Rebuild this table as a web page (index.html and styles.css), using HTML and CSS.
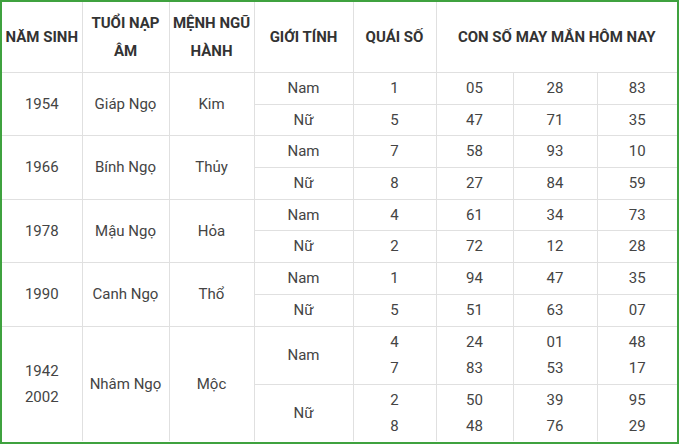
FILE: index.html
```html
<!DOCTYPE html>
<html lang="vi">
<head>
<meta charset="utf-8">
<title>Con số may mắn</title>
<link rel="stylesheet" href="styles.css">
</head>
<body>
<div class="frame">
<table class="luck">
<colgroup>
<col class="c1"><col class="c2"><col class="c3"><col class="c4"><col class="c5"><col class="c6"><col class="c7"><col class="c8">
</colgroup>
<thead>
<tr class="head">
<th>NĂM SINH</th>
<th>TUỔI NẠP<br>ÂM</th>
<th>MỆNH NGŨ<br>HÀNH</th>
<th>GIỚI TÍNH</th>
<th>QUÁI SỐ</th>
<th colspan="3">CON SỐ MAY MẮN HÔM NAY</th>
</tr>
</thead>
<tbody>
<tr class="r32"><td rowspan="2">1954</td><td rowspan="2">Giáp Ngọ</td><td rowspan="2">Kim</td><td>Nam</td><td>1</td><td>05</td><td>28</td><td>83</td></tr>
<tr class="r31"><td>Nữ</td><td>5</td><td>47</td><td>71</td><td>35</td></tr>
<tr class="r32"><td rowspan="2">1966</td><td rowspan="2">Bính Ngọ</td><td rowspan="2">Thủy</td><td>Nam</td><td>7</td><td>58</td><td>93</td><td>10</td></tr>
<tr class="r32"><td>Nữ</td><td>8</td><td>27</td><td>84</td><td>59</td></tr>
<tr class="r31"><td rowspan="2">1978</td><td rowspan="2">Mậu Ngọ</td><td rowspan="2">Hỏa</td><td>Nam</td><td>4</td><td>61</td><td>34</td><td>73</td></tr>
<tr class="r32"><td>Nữ</td><td>2</td><td>72</td><td>12</td><td>28</td></tr>
<tr class="r32"><td rowspan="2">1990</td><td rowspan="2">Canh Ngọ</td><td rowspan="2">Thổ</td><td>Nam</td><td>1</td><td>94</td><td>47</td><td>35</td></tr>
<tr class="r32"><td>Nữ</td><td>5</td><td>51</td><td>63</td><td>07</td></tr>
<tr class="r58"><td rowspan="2">1942<br>2002</td><td rowspan="2">Nhâm Ngọ</td><td rowspan="2">Mộc</td><td>Nam</td><td>4<br>7</td><td>24<br>83</td><td>01<br>53</td><td>48<br>17</td></tr>
<tr class="r57"><td>Nữ</td><td>2<br>8</td><td>50<br>48</td><td>39<br>76</td><td>95<br>29</td></tr>
</tbody>
</table>
</div>
</body>
</html>
```
FILE: styles.css
```css
html, body {
  margin: 0;
  padding: 0;
  background: #ffffff;
}
.frame {
  width: 675px;
  height: 440px;
  border: 2px solid #3fa23f;
  overflow: hidden;
}
.luck {
  width: 675px;
  border-collapse: collapse;
  border-style: hidden;
  table-layout: fixed;
  font-family: Roboto, "Liberation Sans", sans-serif;
  font-size: 15px;
  color: #444444;
}
.c1 { width: 80px; }
.c2 { width: 87px; }
.c3 { width: 85px; }
.c4 { width: 99px; }
.c5 { width: 83px; }
.c6 { width: 77px; }
.c7 { width: 84px; }
.c8 { width: 80px; }
.luck th, .luck td {
  border: 1px solid #e0e0e0;
  padding: 0;
  text-align: center;
  vertical-align: middle;
}
.luck th {
  font-weight: bold;
  color: #333333;
  line-height: 28px;
}
.luck td {
  line-height: 26px;
}
.head { height: 70px; }
.r32 { height: 32px; }
.r31 { height: 31px; }
.r58 { height: 58px; }
.r57 { height: 57px; }
```
